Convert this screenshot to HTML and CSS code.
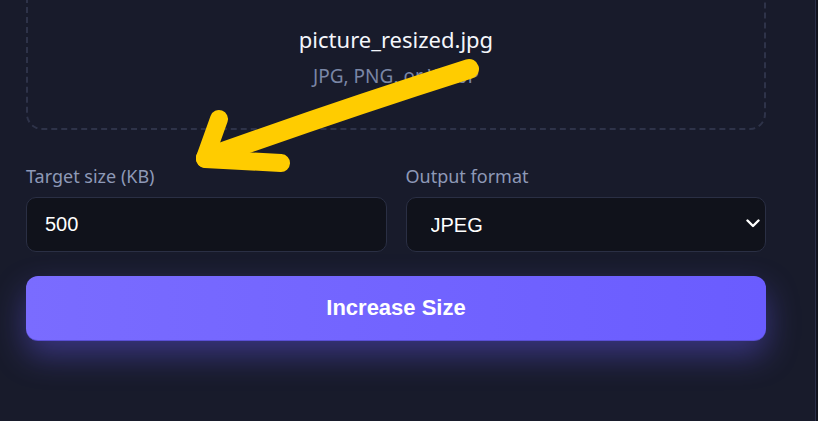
FILE: index.html
```html
<!DOCTYPE html>
<html lang="en">
    <head>
        <meta charset="utf-8">
        <meta name="viewport" content="width=device-width">
        <title>Increase Image Size</title>
        <link rel="stylesheet" href="styles.css">
    </head>
    <body>
        <main class="card">
            <!-- Drop zone, already holding the chosen file -->
            <div class="dropzone">
                <div class="file-name">picture_resized.jpg</div>
                <div class="file-hint">JPG, PNG, or WebP</div>
            </div>

            <div class="fields">
                <div class="field">
                    <label class="field-label" for="targetSize">Target size (KB)</label>
                    <input class="field-input" id="targetSize" type="number" value="500">
                </div>
                <div class="field">
                    <label class="field-label" for="outputFormat">Output format</label>
                    <div class="select-wrap">
                        <select class="field-input field-select" id="outputFormat">
                            <option>JPEG</option>
                            <option>PNG</option>
                            <option>WebP</option>
                        </select>
                        <svg class="select-chevron" width="14" height="9" viewBox="0 0 14 9">
                            <path d="M1.5 1.5 L7 7 L12.5 1.5" fill="none" stroke="#fff" stroke-width="2.4" stroke-linecap="round" stroke-linejoin="round"/>
                        </svg>
                    </div>
                </div>
            </div>

            <button class="submit">Increase Size</button>
        </main>

        <!-- Hand-drawn annotation laid over the page -->
        <svg class="annotation" width="818" height="421" viewBox="0 0 818 421">
            <g fill="none" stroke="#ffcc00" stroke-linecap="round" stroke-linejoin="round">
                <path d="M469 69 Q340 110 206 158" stroke-width="20"/>
                <path d="M219 119 L205 158" stroke-width="18"/>
                <path d="M205 159 L281 163" stroke-width="18"/>
            </g>
        </svg>
    </body>
</html>
```

FILE: styles.css
```css
html {
    background-color: #11131d;
    color: #fff;
    font-family: "Noto Sans", sans-serif;
}

body {
    margin: 0;
    height: 421px;
    overflow: hidden;
}

.card {
    width: 816px;
    box-sizing: border-box;
    height: 461px;
    margin-top: -40px;
    padding: 0 49px 0 26px;
    background-color: #181b2b;
    border-right: 1px solid #2a2f48;
}

.dropzone {
    border: 2px dashed #2e3349;
    border-radius: 16px;
    padding: 62px 20px 39px;
    text-align: center;
}

.file-name {
    font-size: 22px;
    line-height: 30px;
    color: #f4f6fb;
}

.file-hint {
    margin-top: 9px;
    font-size: 19px;
    line-height: 26px;
    color: #7a86a6;
}

.fields {
    display: grid;
    grid-template-columns: 1fr 1fr;
    gap: 19px;
    margin-top: 34px;
}

.field-label {
    display: block;
    font-size: 18px;
    line-height: 24px;
    color: #8e99b7;
    margin-bottom: 9px;
}

.field-input {
    display: block;
    box-sizing: border-box;
    width: 100%;
    height: 55px;
    padding: 0 18px;
    background-color: #10121b;
    border: 1px solid #2a2f44;
    border-radius: 10px;
    color: #fff;
    font-family: "Liberation Sans", Arial, sans-serif;
    font-size: 20px;
    outline: none;
}

.field-input::-webkit-outer-spin-button,
.field-input::-webkit-inner-spin-button {
    -webkit-appearance: none;
    margin: 0;
}

.select-wrap {
    position: relative;
}

.field-select {
    appearance: none;
    -webkit-appearance: none;
    padding-left: 24px;
}

.select-chevron {
    position: absolute;
    right: 6px;
    top: 22px;
    pointer-events: none;
}

.submit {
    display: block;
    width: 100%;
    height: 65px;
    margin-top: 24px;
    border: none;
    border-bottom: 1px solid #5b50d6;
    border-radius: 12px;
    background: linear-gradient(90deg, #7a6cff, #6a5cff);
    box-shadow: 0 14px 32px rgba(108, 92, 255, 0.4);
    color: #fff;
    font-family: "Liberation Sans", Arial, sans-serif;
    font-size: 22px;
    font-weight: bold;
}

.annotation {
    position: absolute;
    left: 0;
    top: 0;
    pointer-events: none;
}
```
